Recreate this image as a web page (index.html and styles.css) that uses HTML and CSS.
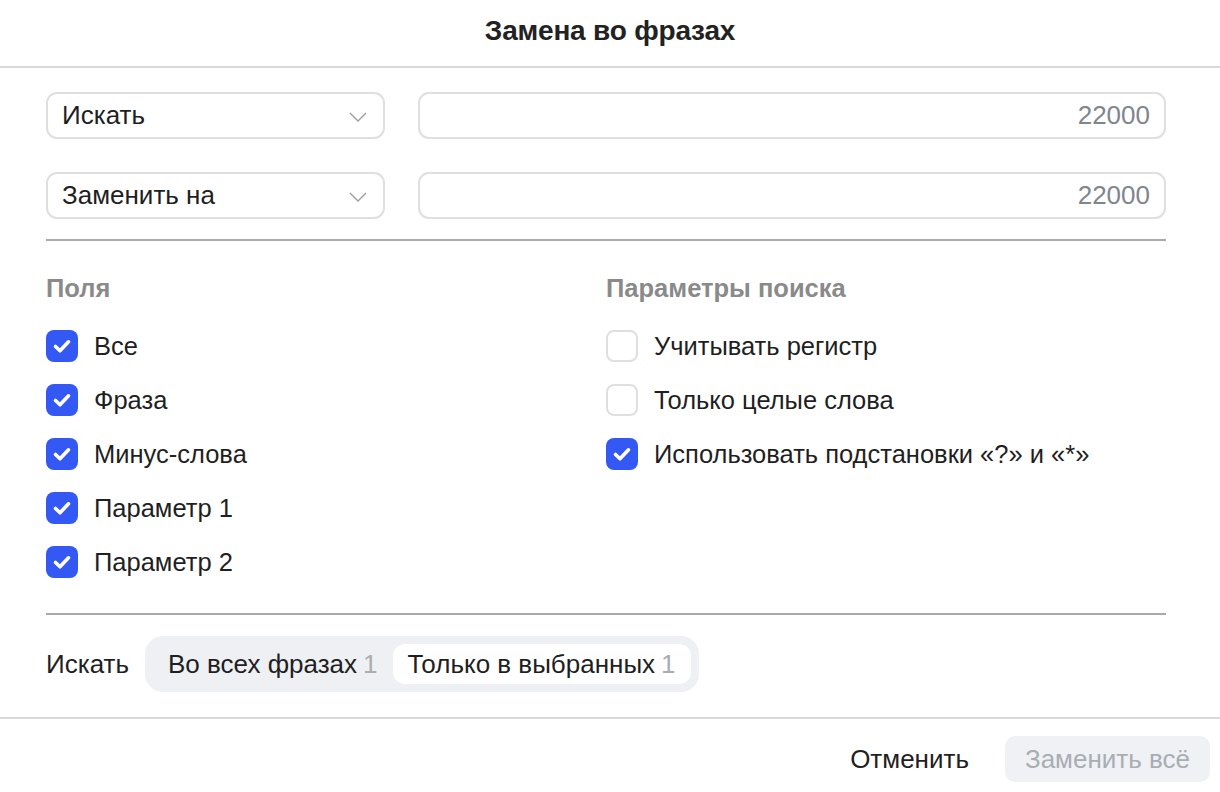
FILE: index.html
```html
<!DOCTYPE html>
<html lang="ru">
<head>
    <meta charset="UTF-8">
    <title>Замена во фразах</title>
    <link rel="stylesheet" href="styles.css">
</head>
<body>
    <div class="dialog">
        <div class="header">Замена во фразах</div>

        <div class="body">
            <div class="field-row">
                <div class="select">
                    <span>Искать</span>
                    <svg class="chevron" width="18" height="10" viewBox="0 0 18 10"><path d="M1 1l8 8 8-8" fill="none" stroke="#9a9ea6" stroke-width="1.4"/></svg>
                </div>
                <div class="input">22000</div>
            </div>
            <div class="field-row">
                <div class="select">
                    <span>Заменить на</span>
                    <svg class="chevron" width="18" height="10" viewBox="0 0 18 10"><path d="M1 1l8 8 8-8" fill="none" stroke="#9a9ea6" stroke-width="1.4"/></svg>
                </div>
                <div class="input">22000</div>
            </div>

            <div class="divider"></div>

            <div class="columns">
                <div class="column">
                    <div class="column-title">Поля</div>
                    <label class="check"><span class="box on"></span>Все</label>
                    <label class="check"><span class="box on"></span>Фраза</label>
                    <label class="check"><span class="box on"></span>Минус-слова</label>
                    <label class="check"><span class="box on"></span>Параметр 1</label>
                    <label class="check"><span class="box on"></span>Параметр 2</label>
                </div>
                <div class="column">
                    <div class="column-title">Параметры поиска</div>
                    <label class="check"><span class="box"></span>Учитывать регистр</label>
                    <label class="check"><span class="box"></span>Только целые слова</label>
                    <label class="check"><span class="box on"></span>Использовать подстановки «?» и «*»</label>
                </div>
            </div>

            <div class="divider"></div>

            <div class="scope">
                <span class="scope-label">Искать</span>
                <div class="segments">
                    <div class="segment">Во всех фразах <span class="count">1</span></div>
                    <div class="segment active">Только в выбранных <span class="count">1</span></div>
                </div>
            </div>
        </div>

        <div class="footer">
            <button class="btn-cancel">Отменить</button>
            <button class="btn-replace" disabled>Заменить всё</button>
        </div>
    </div>
</body>
</html>
```

FILE: styles.css
```css
body {
    margin: 0;
    padding: 0;
    background-color: #ffffff;
    font-family: "Liberation Sans", Arial, sans-serif;
    color: #1f1f1f;
}
.dialog {
    width: 1220px;
    height: 792px;
    display: flex;
    flex-direction: column;
}
.header {
    height: 68px;
    box-sizing: border-box;
    padding-bottom: 4px;
    border-bottom: 2px solid #d9d9d9;
    display: flex;
    align-items: center;
    justify-content: center;
    font-size: 28px;
    font-weight: bold;
    color: #222;
    letter-spacing: -0.2px;
}
.body {
    padding: 24px 54px 0 46px;
}
.field-row {
    display: flex;
    gap: 33px;
    margin-bottom: 33px;
}
.select, .input {
    box-sizing: border-box;
    height: 47px;
    border: 2px solid #dedfe1;
    border-radius: 11px;
    display: flex;
    align-items: center;
    font-size: 26px;
}
.select {
    width: 339px;
    padding: 0 16px 0 14px;
    justify-content: space-between;
}
.input {
    flex: 1;
    justify-content: flex-end;
    padding: 0 14px;
    color: #80858e;
}
.chevron {
    margin-top: 2px;
}
.divider {
    height: 2px;
    background-color: #a9a9a9;
}
.field-row + .divider {
    margin-top: -13px;
}
.columns {
    display: flex;
    padding: 33px 0 24px;
}
.column {
    width: 560px;
    display: flex;
    flex-direction: column;
}
.column-title {
    font-size: 25.5px;
    font-weight: bold;
    color: #8a8a8a;
    margin-bottom: 16px;
}
.check {
    display: flex;
    align-items: center;
    gap: 16px;
    height: 54px;
    font-size: 25.5px;
}
.box {
    box-sizing: border-box;
    width: 32px;
    height: 32px;
    border: 2px solid #dedfe1;
    border-radius: 8px;
    flex-shrink: 0;
}
.box.on {
    border: none;
    background: #3358f4 url("data:image/svg+xml;utf8,<svg xmlns='http://www.w3.org/2000/svg' width='32' height='32' viewBox='0 0 32 32'><path d='M9.5 16.5l4.5 4.3 8.5-9' fill='none' stroke='white' stroke-width='3.6' stroke-linecap='round' stroke-linejoin='round'/></svg>") no-repeat center;
}
.scope {
    display: flex;
    align-items: center;
    gap: 16px;
    padding-top: 21px;
}
.scope-label {
    font-size: 26px;
}
.segments {
    display: flex;
    background-color: #eef0f3;
    border-radius: 18px;
    padding: 8px;
    height: 40px;
}
.segment {
    display: flex;
    align-items: center;
    padding: 0 15px;
    border-radius: 12px;
    font-size: 26px;
}
.segment.active {
    background-color: #ffffff;
}
.count {
    color: #a9adb3;
    margin-left: 6px;
}
.footer {
    margin-top: auto;
    height: 75px;
    box-sizing: border-box;
    padding: 17px 10px 0 0;
    border-top: 2px solid #d9d9d9;
    display: flex;
    align-items: flex-start;
    justify-content: flex-end;
    gap: 36px;
}
button {
    font-family: "Liberation Sans", Arial, sans-serif;
    font-size: 26px;
    border: none;
    background: none;
}
.btn-cancel {
    color: #1f1f1f;
    padding: 0;
    height: 46px;
}
.btn-replace {
    height: 46px;
    padding: 0 20px;
    border-radius: 10px;
    background-color: #f0f1f4;
    color: #a9adb4;
}
```
